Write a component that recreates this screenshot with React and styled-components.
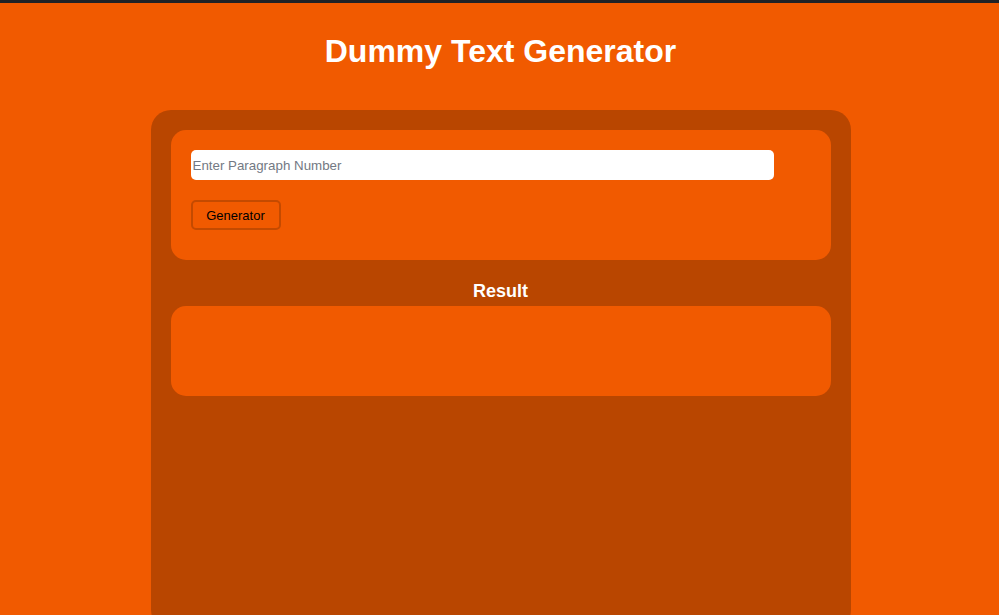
import styled, { createGlobalStyle } from 'styled-components';

const GlobalStyle = createGlobalStyle`
  html, body {
    margin: 0;
    padding: 0;
    background: #f15a00;
    font-family: "Liberation Sans", Arial, sans-serif;
  }
`;

const Page = styled.div`
  min-height: 615px;
  border-top: 3px solid #212226;
  box-sizing: border-box;
  padding-left: 2px;
  display: flex;
  flex-direction: column;
  align-items: center;
`;

const Title = styled.h1`
  margin: 30px 0 0;
  font-size: 32px;
  line-height: 37px;
  font-weight: 700;
  color: #ffffff;
  text-align: center;
`;

const Panel = styled.main`
  margin-top: 40px;
  width: 700px;
  min-height: 520px;
  box-sizing: border-box;
  padding: 20px;
  background: #b94600;
  border-radius: 20px;
  display: flex;
  flex-direction: column;
`;

const Card = styled.div`
  background: #f15a00;
  border-radius: 15px;
  padding: 20px;
  height: ${(p) => p.$height}px;
  box-sizing: border-box;
  display: flex;
  flex-direction: column;
  align-items: flex-start;
  gap: 20px;
`;

const Input = styled.input`
  width: 583px;
  height: 30px;
  box-sizing: border-box;
  border: none;
  border-radius: 5px;
  padding: 0 2px;
  font-family: "Liberation Sans", Arial, sans-serif;
  font-size: 13.33px;
  background: #ffffff;
  outline: none;

  &::placeholder {
    color: #737983;
  }
`;

const Button = styled.button`
  height: 30px;
  width: 90px;
  box-sizing: border-box;
  background: #f15a00;
  border: 2px solid #c44a00;
  border-radius: 5px;
  font-family: "Liberation Sans", Arial, sans-serif;
  font-size: 13px;
  color: #000000;
  cursor: pointer;
`;

const ResultTitle = styled.h2`
  margin: 21px 0 5px;
  font-size: 18px;
  line-height: 20px;
  font-weight: 700;
  color: #ffffff;
  text-align: center;
`;

export default function App() {
  return (
    <>
      <GlobalStyle />
      <Page>
        <Title>Dummy Text Generator</Title>
        <Panel>
          <Card $height={130}>
            <Input type="number" placeholder="Enter Paragraph Number" />
            <Button>Generator</Button>
          </Card>
          <ResultTitle>Result</ResultTitle>
          <Card $height={90} />
        </Panel>
      </Page>
    </>
  );
}
